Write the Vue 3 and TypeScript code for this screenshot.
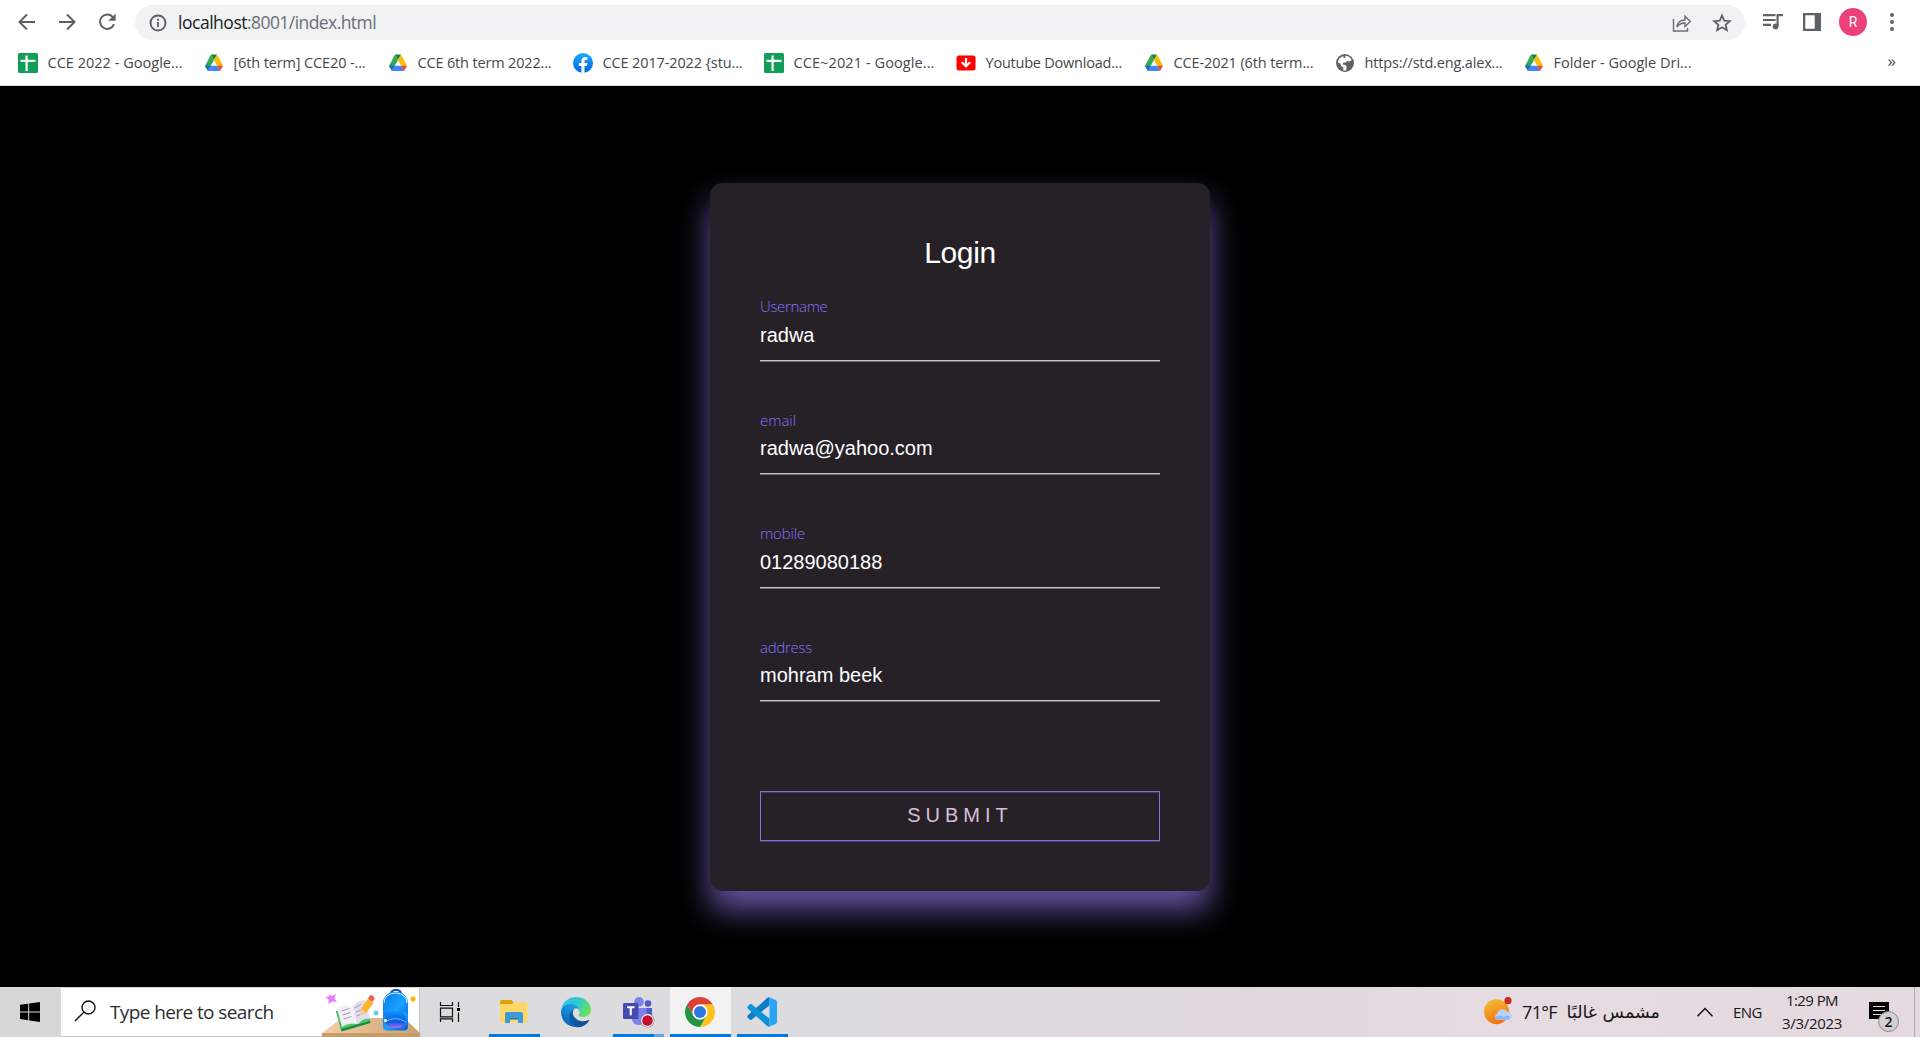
<script setup lang="ts">
import { reactive } from 'vue'
import type { Directive } from 'vue'

type IconKind = 'sheet' | 'drive' | 'facebook' | 'download' | 'globe'

interface Bookmark {
  icon: IconKind
  label: string
  slot: number
  text: number
}

const bookmarks: Bookmark[] = [
  { icon: 'sheet', label: 'CCE 2022 - Google...', slot: 186, text: 135 },
  { icon: 'drive', label: '[6th term] CCE20 -...', slot: 184, text: 132 },
  { icon: 'drive', label: 'CCE 6th term 2022...', slot: 185, text: 134 },
  { icon: 'facebook', label: 'CCE 2017-2022 {stu...', slot: 191, text: 140 },
  { icon: 'sheet', label: 'CCE~2021 - Google...', slot: 192, text: 141 },
  { icon: 'download', label: 'Youtube Download...', slot: 188, text: 136.5 },
  { icon: 'drive', label: 'CCE-2021 (6th term...', slot: 191, text: 140 },
  { icon: 'globe', label: 'https://std.eng.alex...', slot: 189, text: 138 },
  { icon: 'drive', label: 'Folder - Google Dri...', slot: 190, text: 138 },
]

const fields = reactive([
  { label: 'Username', value: 'radwa', width: 67.5 },
  { label: 'email', value: 'radwa@yahoo.com', width: 36 },
  { label: 'mobile', value: '01289080188', width: 45 },
  { label: 'address', value: 'mohram beek', width: 52 },
])

// Tracks the text so that it fills the given width in pixels.
const vFit: Directive<HTMLElement, number> = {
  mounted(el, binding) {
    const count = (el.textContent ?? '').length
    const natural = el.getBoundingClientRect().width
    el.style.letterSpacing = `${(binding.value - natural) / count}px`
  },
}
</script>

<template>
  <div class="screen">
    <header class="browser">
      <div class="toolbar">
        <svg class="nav back" viewBox="0 0 18 18"><path d="M17 9H2M9 1.5 1.5 9 9 16.5" /></svg>
        <svg class="nav forward" viewBox="0 0 18 18"><path d="M1 9h15M9 1.5 16.500 9 9 16.500" /></svg>
        <svg class="nav reload" viewBox="0 0 18 18">
          <path d="M15.200 4.600A7.200 7.200 0 1 0 16 11.200" />
          <path class="solid" d="M17.600.600v7.200h-7.200z" />
        </svg>
        <div class="address">
          <svg class="info" viewBox="0 0 18 18">
            <circle cx="9" cy="9" r="7.500" />
            <path d="M9 8v5M9 4.800v1.900" />
          </svg>
          <span class="url"><span v-fit="69">localhost</span><span v-fit="129" class="path">:8001/index.html</span></span>
          <svg class="share" viewBox="0 0 20 20">
            <path d="M1.500 6v12h14v-3M5 14c.500-5 3.500-7 8-7V3.200l5.300 5.300L13 13.700V10c-3.500 0-6 1-8 4z" />
          </svg>
          <svg class="star" viewBox="0 0 20 20">
            <path d="m10 2.500 2.250 5.100 5.550.500-4.200 3.650 1.250 5.450L10 14.300l-4.850 2.900 1.250-5.450L2.200 8.100l5.550-.500z" />
          </svg>
        </div>
        <svg class="queue" viewBox="0 0 20 16">
          <path class="line" d="M0 1.200h12.500M0 6h12.500M0 10.800h8" />
          <path class="line" d="M14.600 12V1.200H20" />
          <circle cx="12.600" cy="12.400" r="2.900" />
        </svg>
        <svg class="panel" viewBox="0 0 18 18"><path fill-rule="evenodd" d="M0 0h18v18H0zM2.300 2.300v13.400h9.400V2.300z" /></svg>
        <span class="avatar">R</span>
        <svg class="menu" viewBox="0 0 6 20"><circle cx="3" cy="3" r="2" /><circle cx="3" cy="10" r="2" /><circle cx="3" cy="17" r="2" /></svg>
      </div>

      <nav class="bookmarks">
        <a v-for="(item, i) in bookmarks" :key="i" class="bookmark" :style="{ width: item.slot + 'px' }">
          <svg v-if="item.icon === 'sheet'" class="favicon" viewBox="0 0 20 20">
            <rect width="20" height="20" rx="1.500" fill="#119e57" />
            <path d="M8.600 2.500v15.500M2.500 7.900h15" stroke="#fff" stroke-width="2.200" />
          </svg>
          <svg v-else-if="item.icon === 'drive'" class="favicon" viewBox="0 0 20 20">
            <path d="M7 1.500h6L10 7z" fill="#188038" />
            <path d="M7 1.500 10 7 4 17.700 1 13z" fill="#34a853" />
            <path d="M13 1.500 19 12.700h-6L10 7z" fill="#fbbc04" />
            <path d="M13 12.700h6l-3 5.300z" fill="#ea4335" />
            <path d="M1 12.700h6L4 18z" fill="#1967d2" />
            <path d="M7 12.700h6l3 5.300H4z" fill="#4285f4" />
          </svg>
          <svg v-else-if="item.icon === 'facebook'" class="favicon" viewBox="0 0 20 20">
            <defs><linearGradient id="fb" x2="0" y2="1"><stop stop-color="#18acfe" /><stop offset="1" stop-color="#0163e0" /></linearGradient></defs>
            <circle cx="10" cy="10" r="10" fill="url(#fb)" />
            <path d="m13.900 12.900.450-2.900h-2.800V8.200c0-.800.400-1.550 1.600-1.550h1.300V4.200s-1.150-.200-2.250-.200C9.900 4 8.400 5.400 8.400 7.900V10H5.900v2.900h2.500v7a10 10 0 0 0 3.100 0v-7z" fill="#fff" />
          </svg>
          <svg v-else-if="item.icon === 'download'" class="favicon" viewBox="0 0 20 20">
            <rect x=".500" y="2.500" width="19" height="15" rx="2.500" fill="#f00" />
            <path d="M10 5v7.500M5.800 9.200 10 13.300l4.200-4.100" fill="none" stroke="#fff" stroke-width="2.200" />
          </svg>
          <svg v-else class="favicon" viewBox="0 0 20 20">
            <circle cx="10" cy="10" r="9" fill="#5f6368" />
            <path d="M10.500 2.700c2.600.100 5 1.700 6.200 4.200l-2.100 1.700-2.300-.500-1.500 1.300-2.700.300-.600 1.700 2.800.700 1.400 1.700-.600 3.500c-1 .400-2.300.100-2.900-.100l.300-2.800-2.300-1.400-.900-2.500-2.500-1C3 6.500 5.600 3.700 8.500 2.900l-.300 1.800 2.100.400z" fill="#fff" />
          </svg>
          <span v-fit="item.text" class="title">{{ item.label }}</span>
        </a>
        <span class="more">»</span>
      </nav>
    </header>

    <main class="page">
      <form class="card" @submit.prevent>
        <h2>Login</h2>
        <div v-for="field in fields" :key="field.label" class="field">
          <label><span v-fit="field.width">{{ field.label }}</span></label>
          <input v-model="field.value" type="text" />
        </div>
        <button type="submit">SUBMIT</button>
      </form>
    </main>

    <footer class="taskbar">
      <div class="start">
        <svg viewBox="0 0 20 20"><path d="M0 2.800 8.200 1.700V9.400H0zM9.200 1.500 20 0v9.400H9.200zM0 10.400h8.200v7.800L0 17.100zM9.200 10.400H20V20L9.200 18.400z" /></svg>
      </div>
      <div class="search">
        <svg class="lens" viewBox="0 0 22 22"><circle cx="14.500" cy="7.500" r="6.500" /><path d="M9.800 12.200 1 21" /></svg>
        <span v-fit="163.5" class="hint">Type here to search</span>
        <svg class="art" viewBox="0 0 98 48">
          <defs>
            <linearGradient id="bag" x2="1" y2="1"><stop stop-color="#0878e8" /><stop offset=".5" stop-color="#18a3ff" /><stop offset="1" stop-color="#0a55cf" /></linearGradient>
            <linearGradient id="pocket" x2="0" y2="1"><stop stop-color="#1593ff" /><stop offset=".65" stop-color="#075bdd" /><stop offset="1" stop-color="#b06af5" /></linearGradient>
            <linearGradient id="desk" x2="1"><stop stop-color="#f4cfa4" /><stop offset="1" stop-color="#c9a273" /></linearGradient>
          </defs>
          <path d="M0 44 20 29h62l16 15z" fill="url(#desk)" />
          <path d="M0 44h98v4H0z" fill="#c69c6d" />
          <path d="M7.500 4.500q1.500 3 2.500 2.500t4.500-2q-2.500 3.500-2 4.500t2.500 4q-4-1.500-5-1T6.500 15.500q.500-4.500-.200-5.300T3 8q4-.200 4.300-1z" fill="#e77bfa" />
          <path d="m14 22 5.500 20.500 29-8.500-1-5z" fill="#188a45" />
          <path d="m14 22 5 18 29-8-1.500-4z" fill="#4fc768" />
          <path d="M15 19q8-5 16-1l5 17q-9-2-16 3z" fill="#f4eef9" />
          <path d="M31 18q5-7 12-7l5 19q-7-1-12 5z" fill="#e3dbf0" />
          <path d="m19.500 22 8-2.500m-7 6.500 8-2.500m-7 6.500 8-2.500m3-8.500 7-4m-6 8 9-3m-8 7 9-3" stroke="#a59ab8" fill="none" />
          <path d="m37.500 26.500 1.500-7 5 5z" fill="#f3cfa3" />
          <path d="m39 19.500 7-10 5.500 4.500-7.500 10z" fill="#fdb52b" />
          <path d="m46 9.500 2-3q1-1 3 .500t1.500 3L50.500 13z" fill="#f25b50" />
          <circle cx="54" cy="24" r="2.500" fill="#62cdea" />
          <circle cx="91" cy="10" r="2.500" fill="#ffb000" />
          <path d="M69 5q0-4 5-4t5 4" stroke="#0754bd" stroke-width="2" fill="none" />
          <rect x="61" y="3" width="25" height="38" rx="11" fill="url(#bag)" />
          <rect x="61" y="23" width="25" height="18.500" rx="4" fill="url(#bag)" />
          <path d="M62 14q0-9 11.500-10Q85 5 85 14" stroke="#d6e8ff" fill="none" />
          <rect x="63" y="22" width="21" height="17" rx="8" fill="url(#pocket)" />
          <path d="M63 33q10-7 21 0" stroke="#5db9ff" fill="none" />
          <rect x="62" y="30" width="3" height="3" rx="1" fill="#dff1ff" />
        </svg>
      </div>
      <div class="app taskview">
        <svg viewBox="0 0 21 20"><path d="M1.500 0v3.500h12V0M1.500 6.200h12v8.600h-12zM1.500 20v-3.200h12V20M19.500 0v5M19.500 10.500V20" /><path class="knob" d="M18 6h3v3h-3z" /></svg>
      </div>
      <div class="app explorer open">
        <svg viewBox="0 0 28 24">
          <path d="M0 1.500Q0 0 1.500 0h10l2 2.500V5H0z" fill="#dfa00b" />
          <path d="M0 4h12l2-1.500h12q1.500 0 1.500 1.500v17q0 1.500-1.500 1.500h-24.500Q0 22.500 0 21z" fill="#ffd767" />
          <path d="M5 23V14q0-2 2-2h14q2 0 2 2v9h-5v-5.500h-8V23z" fill="#3b9ade" />
          <path d="M10 17.500h8v2h-8z" fill="#1976bd" />
        </svg>
      </div>
      <div class="app edge">
        <svg viewBox="0 0 256 256">
          <defs>
            <linearGradient id="e1" x1=".3" x2="1"><stop stop-color="#0c59a4" /><stop offset="1" stop-color="#114a8b" /></linearGradient>
            <linearGradient id="e2" x1=".7" y1=".2" x2=".3" y2="1"><stop stop-color="#1b9de2" /><stop offset=".5" stop-color="#1280ce" /><stop offset="1" stop-color="#0b5bab" /></linearGradient>
            <linearGradient id="e3" y1=".2" x2="1" y2=".6"><stop stop-color="#35c1f1" /><stop offset=".5" stop-color="#2fc9cf" /><stop offset="1" stop-color="#6be44f" /></linearGradient>
          </defs>
          <path fill="url(#e1)" d="M235.700 195.500a93.700 93.700 0 0 1-10.600 4.700 101.900 101.900 0 0 1-35.900 6.500c-47.300 0-88.500-32.600-88.500-74.300a31.500 31.500 0 0 1 16.400-27.300c-42.800 1.800-53.800 46.400-53.800 72.500 0 74 68.100 81.400 82.800 81.400 7.900 0 19.800-2.300 27-4.600l1.300-.400a128.300 128.300 0 0 0 66.600-52.800 4 4 0 0 0-5.300-5.700z" />
          <path fill="url(#e2)" d="M105.700 241.400a79.200 79.200 0 0 1-22.700-21.300 80.700 80.700 0 0 1 29.500-120c3.200-1.500 8.500-4.100 15.600-4a32.400 32.400 0 0 1 25.700 13 31.900 31.900 0 0 1 6.300 18.700c0-.200 24.500-79.600-80-79.600-43.900 0-80 41.600-80 78.200a130.200 130.200 0 0 0 12.100 56 128 128 0 0 0 156.400 67 75.500 75.500 0 0 1-62.800-8z" />
          <path fill="url(#e3)" d="M152.300 148.900c-.900 1-3.400 2.500-3.400 5.600 0 2.600 1.700 5.200 4.800 7.300 14.300 10 41.400 8.600 41.500 8.600a59.600 59.600 0 0 0 30.300-8.300 61.400 61.400 0 0 0 30.400-52.900c.300-22.400-8-37.300-11.300-43.900C223.500 23.900 177.700 0 128 0A128 128 0 0 0 0 126.200c.500-36.500 36.800-66 80-66 3.500 0 23.500.300 42 10a72.600 72.600 0 0 1 30.900 29.300c6.100 10.600 7.200 24.100 7.200 29.500s-2.700 13.300-7.800 19.900z" />
        </svg>
      </div>
      <div class="app teams">
        <svg viewBox="0 0 32 31">
          <circle cx="25" cy="6.500" r="3.300" fill="#5059c9" />
          <path d="M21 11h8v9q0 3-4 4z" fill="#5059c9" />
          <circle cx="16" cy="4.800" r="4.800" fill="#7b83eb" />
          <path d="M9 11h14.500v10q0 7-7.500 7t-7-7z" fill="#7b83eb" />
          <rect y="6" width="15.500" height="16" rx="1.500" fill="#444ab2" />
          <path d="M4 10.200h7.500M7.750 10.200v8" stroke="#fff" stroke-width="2.100" fill="none" />
          <circle cx="24.500" cy="23.500" r="7" fill="#8b7f87" />
          <circle cx="24.500" cy="23.500" r="6.400" fill="#f7f1f3" />
          <circle cx="24.500" cy="23.500" r="5.300" fill="#c50f2f" />
        </svg>
      </div>
      <div class="app chrome open">
        <svg viewBox="0 0 48 48">
          <path fill="#dc4034" d="M3.220 12A24 24 0 0 1 44.780 12H24A12 12 0 0 0 13.600 30z" />
          <path fill="#fcc31e" d="M44.780 12A24 24 0 0 1 24 48L34.400 30A12 12 0 0 0 24 12z" />
          <path fill="#229342" d="M24 48A24 24 0 0 1 3.220 12L13.600 30A12 12 0 0 0 34.400 30z" />
          <circle cx="24" cy="24" r="12" fill="#fff" />
          <circle cx="24" cy="24" r="9.600" fill="#2b78e4" />
        </svg>
      </div>
      <div class="app code open">
        <svg viewBox="0 0 100 100">
          <path fill="#0a7bc4" d="M3 61q-4 4 0 8l6 6q3 3 7 0L75 28V1q-3-1-6 1z" />
          <path fill="#0c92d9" d="M3 39q-4-4 0-8l6-6q3-3 7 0l59 47v27q-3 1-6-1z" />
          <path fill="#27a5f2" d="m72 0 25 11q3 2 3 5v68q0 3-3 5l-25 11 3-6V6z" />
        </svg>
      </div>

      <div class="tray">
        <svg class="weather" viewBox="0 0 28 28">
          <defs><linearGradient id="sun" x1=".2" x2=".6" y2="1"><stop stop-color="#f4bd32" /><stop offset="1" stop-color="#f26f13" /></linearGradient></defs>
          <circle cx="12.500" cy="14.700" r="12.500" fill="url(#sun)" />
          <circle cx="24" cy="3.700" r="3.600" fill="#c82a20" />
          <path d="M13.500 23a3.500 3.500 0 0 1 0-6.700 5.500 5.500 0 0 1 10-1.300 4 4 0 0 1 1 8z" fill="#b8d3fa" />
          <path d="M13 22.500q-3-2 0-3.500 5-1 7 1 3-2 6-.500 0 3-3 3.200z" fill="#91b5f1" />
        </svg>
        <span class="temp"><span v-fit="35">71°F</span></span>
        <span class="forecast" lang="ar" dir="rtl">مشمس غالبًا</span>
        <svg class="chevron" viewBox="0 0 16 10"><path d="M.500 9.300 8 1.500l7.500 7.800" /></svg>
        <span class="lang"><span v-fit="29">ENG</span></span>
        <div class="clock"><span><span v-fit="52">1:29 PM</span></span><span><span v-fit="60">3/3/2023</span></span></div>
        <div class="notes">
          <svg viewBox="0 0 20 21"><path d="M0 0h20v17h-6v4l-4-4H0z" /><path d="M4 4.500h12M4 8.500h12M4 12.500h8" stroke="#e4dadf" stroke-width="1.200" /></svg>
          <span class="count">2</span>
        </div>
        <i class="peek"></i>
      </div>
    </footer>
  </div>
</template>

<style>
body {
  margin: 0;
  overflow: hidden;
}
</style>

<style scoped>
.screen {
  width: 1920px;
  height: 1037px;
  display: flex;
  flex-direction: column;
  overflow: hidden;
  font-family: "Open Sans", "Noto Sans", sans-serif;
}
svg {
  display: block;
  flex: none;
  overflow: visible;
}

/* Browser */
.browser {
  box-sizing: border-box;
  height: 86px;
  flex: none;
  background: #fff;
  border-bottom: 1px solid #d5d6d8;
}
.toolbar {
  height: 45px;
  display: flex;
  align-items: center;
}
.nav {
  width: 18px;
  height: 18px;
  margin-top: -1px;
  fill: none;
  stroke: #5c6065;
  stroke-width: 2;
}
.nav .solid {
  fill: #5c6065;
  stroke: none;
}
.back {
  margin-left: 18px;
}
.forward {
  margin-left: 22px;
}
.reload {
  margin: -1px 19px 0 22px;
}
.address {
  width: 1610px;
  height: 35px;
  flex: none;
  display: flex;
  align-items: center;
  background: #f1f2f4;
  border-radius: 18px;
}
.info {
  width: 18px;
  height: 18px;
  margin: 0 11px 0 14px;
  fill: none;
  stroke: #5c6065;
  stroke-width: 1.9;
}
.url {
  flex: 1;
  font-size: 17.5px;
  line-height: 34px;
  margin-top: -1px;
  color: #202124;
  white-space: nowrap;
}
.url span {
  display: inline-block;
}
.path {
  color: #6b6f74;
}
.share {
  width: 20px;
  height: 20px;
  margin-right: 20px;
  fill: none;
  stroke: #6b6f73;
  stroke-width: 1.4;
}
.star {
  width: 20px;
  height: 20px;
  margin-right: 13px;
  fill: none;
  stroke: #5f6368;
  stroke-width: 1.8;
}
.queue {
  width: 20px;
  height: 16px;
  margin: -2px 0 0 18px;
  fill: #5f6368;
}
.queue .line {
  fill: none;
  stroke: #5f6368;
  stroke-width: 2.2;
}
.panel {
  width: 18px;
  height: 18px;
  margin: -1px 18px 0 20px;
  fill: #5f6368;
}
.avatar {
  width: 28px;
  height: 28px;
  flex: none;
  margin-top: -1px;
  border-radius: 50%;
  background: #ec407a;
  color: #fff;
  font: 14px/28px Roboto, sans-serif;
  text-align: center;
}
.menu {
  width: 6px;
  height: 20px;
  margin: -1px 0 0 22px;
  fill: #5f6368;
}
.bookmarks {
  height: 36px;
  display: flex;
  align-items: center;
  padding-left: 18px;
}
.bookmark {
  display: flex;
  align-items: center;
  flex: none;
  gap: 10px;
}
.favicon {
  width: 20px;
  height: 20px;
}
.title {
  margin: -1px 0 0 -0.5px;
  font-size: 14.5px;
  line-height: 20px;
  color: #45484b;
  white-space: nowrap;
}
.more {
  margin: -4px 24px 0 auto;
  font-size: 17px;
  line-height: 20px;
  color: #4a4d51;
}

/* Page */
.page {
  height: 901px;
  flex: none;
  background: #000;
  display: flex;
  justify-content: center;
  align-items: flex-start;
}
.card {
  box-sizing: border-box;
  width: 500px;
  height: 708px;
  margin-top: 97px;
  padding: 50px;
  background: #252126;
  border-radius: 12.5px;
  box-shadow: 0 18.75px 31.25px rgba(123, 104, 200, 0.8);
}
h2 {
  margin: 0 0 21px;
  font: 30px/40px "Liberation Sans", sans-serif;
  letter-spacing: -0.4px;
  color: #fff;
  text-align: center;
}
.field {
  height: 67.6px;
  margin-bottom: 45.8px;
}
label {
  display: block;
  box-sizing: border-box;
  height: 24.4px;
  padding-top: 0.4px;
  font-size: 15px;
  line-height: 24px;
  font-weight: 300;
  color: #8672ff;
  white-space: nowrap;
}
label span {
  display: inline-block;
}
input {
  display: block;
  box-sizing: border-box;
  width: 400px;
  height: 42.6px;
  padding: 0 0 7.6px;
  border: 0;
  border-bottom: 1px solid #c6c5c7;
  box-shadow: 0 1px 0 #6f6c70;
  outline: none;
  background: transparent;
  color: #fff;
  font: 20px/34px "Liberation Sans", sans-serif;
}
button {
  display: block;
  box-sizing: border-box;
  width: 400px;
  height: 50px;
  margin: 89.4px 0 0;
  padding: 0 0 3px;
  border: 1px solid #8370d4;
  background: transparent;
  box-shadow: 0 1px 0 #4b4272, inset 0 1px 0 #423a60;
  color: #d8bfd8;
  font: 20px/44px "Liberation Sans", sans-serif;
  letter-spacing: 5px;
}

/* Taskbar */
.taskbar {
  height: 50px;
  flex: none;
  display: flex;
  background: linear-gradient(90deg, #d7d7d8 0, #dcdcde 500px, #dcdbde 850px, #e1d8dd 1250px, #e5dbe0 1500px, #e3d9de 100%);
}
.start {
  width: 61px;
  display: flex;
  align-items: center;
}
.start svg {
  width: 20px;
  height: 20px;
  margin-left: 20px;
}
.search {
  box-sizing: border-box;
  width: 359px;
  height: 49px;
  margin-top: 1px;
  border: 1px solid #c6c6c7;
  border-width: 0 1px 1px 0;
  background: #fff;
  display: flex;
  align-items: center;
  flex: none;
}
.lens {
  width: 22px;
  height: 22px;
  margin: -3px 14px 0 13px;
  fill: none;
  stroke: #111;
  stroke-width: 1.4;
}
.hint {
  font-size: 19px;
  line-height: 48px;
  color: #2d2d2d;
  white-space: nowrap;
}
.art {
  width: 98px;
  height: 48px;
  margin: 2px -1px 0 auto;
}
.app {
  box-sizing: border-box;
  height: 50px;
  display: flex;
  flex: none;
  align-items: center;
  justify-content: center;
}
.open {
  border-bottom: 3px solid #0078d7;
}
.taskview {
  width: 61px;
  margin-right: 8px;
}
.taskview svg {
  width: 21px;
  height: 20px;
  margin: -1px 2px 0 0;
  fill: none;
  stroke: #111;
  stroke-width: 1.2;
}
.taskview .knob {
  fill: #000;
  stroke: none;
}
.explorer {
  width: 51px;
}
.explorer svg {
  width: 28px;
  height: 24px;
  margin: 3px 2px 0 0;
}
.edge {
  width: 73px;
}
.edge svg {
  width: 30px;
  height: 30px;
  margin-right: 2px;
}
.teams {
  width: 51px;
  background: linear-gradient(90deg, #0078d7 41px, #5ea9e4 41px) 0 100% / 51px 3px no-repeat;
}
.teams svg {
  width: 32px;
  height: 31px;
  margin-top: 1px;
}
.chrome {
  width: 61px;
  margin: 0 6px;
  background: #f2f2f3;
}
.chrome svg,
.code svg {
  width: 30px;
  height: 30px;
  margin: 3px 1px 0 0;
}
.code {
  width: 51px;
}
.code svg {
  margin-right: 2px;
}
.tray {
  flex: 1;
  display: flex;
  align-items: center;
  justify-content: flex-end;
  color: #181618;
  font-size: 15px;
  white-space: nowrap;
}
.tray span span {
  display: inline-block;
}
.weather {
  width: 28px;
  height: 28px;
  margin: -2px 10px 0 0;
}
.temp {
  width: 35px;
  font-size: 18px;
  line-height: 48px;
  margin-right: 10px;
}
.forecast {
  width: 93px;
  font: 17.5px/48px "DejaVu Sans", sans-serif;
  margin-right: 37px;
}
.chevron {
  width: 16px;
  height: 10px;
  margin-right: 20px;
  fill: none;
  stroke: #111;
  stroke-width: 1.4;
}
.lang {
  width: 29px;
  line-height: 48px;
  margin-right: 20px;
}
.clock {
  width: 60px;
  margin-right: 27px;
  display: flex;
  flex-direction: column;
  align-items: center;
  line-height: 23px;
}
.notes {
  position: relative;
  width: 20px;
  height: 20px;
}
.notes svg {
  width: 20px;
  height: 21px;
}
.count {
  position: absolute;
  left: 9px;
  top: 9px;
  box-sizing: border-box;
  width: 21px;
  height: 21px;
  border: 1px solid #8d888b;
  border-radius: 50%;
  background: #d3cfd1;
  color: #111;
  font-size: 14px;
  font-weight: 600;
  line-height: 19px;
  text-align: center;
}
.peek {
  width: 1px;
  height: 50px;
  margin: 0 5px 0 25px;
  background: #aca5a9;
}
</style>
